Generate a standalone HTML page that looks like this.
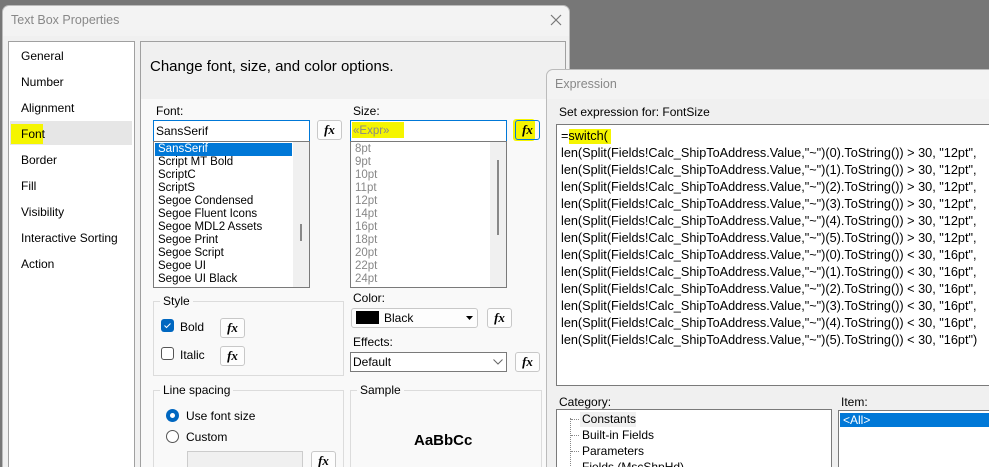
<!DOCTYPE html>
<html><head><meta charset="utf-8"><style>
*{margin:0;padding:0;box-sizing:border-box}
html,body{width:989px;height:467px;overflow:hidden}
body{background:#777;font-family:"Liberation Sans",sans-serif;font-size:12px;color:#000;position:relative}
.a{position:absolute}
.t{position:absolute;white-space:nowrap;line-height:14px}
.fx{position:absolute;width:25px;height:20px;border:1px solid #c8c8c8;border-radius:3px;background:#fdfdfd;font-family:"Liberation Serif",serif;font-style:italic;font-weight:bold;font-size:13px;text-align:center;line-height:18px}
.box{position:absolute;background:#fff;border:1px solid #7a7a7a}
.grp{position:absolute;border:1px solid #dcdcdc}
.lbl{position:absolute;background:#f9f9f9;padding:0 3px;top:-8px;left:6px;line-height:14px}
.li{height:13px;line-height:13px;padding-left:3px;font-size:11.5px;white-space:nowrap}
</style></head><body>
<div class="a" style="left:2px;top:5px;width:568px;height:470px;background:#f0f0f0;border-radius:7px 7px 0 0;border:1px solid #bbb"></div>
<div class="a" style="left:3px;top:6px;width:566px;height:30px;background:#f3f3f3;border-radius:7px 7px 0 0"></div>
<div class="t" style="left:11px;top:13px;color:#888;font-size:12.5px">Text Box Properties</div>
<svg class="a" style="left:550px;top:14px" width="12" height="12"><path d="M1 1L11 11M11 1L1 11" stroke="#777" stroke-width="1.2"/></svg>
<div class="box" style="left:8px;top:41px;width:127px;height:430px;border-color:#a0a0a0"></div>
<div class="a" style="left:10px;top:121px;width:122px;height:24px;background:#e6e6e6"></div>
<div class="a" style="left:11px;top:124px;width:32px;height:20px;background:#f5f500"></div>
<div class="t" style="left:21px;top:49px">General</div>
<div class="t" style="left:21px;top:75px">Number</div>
<div class="t" style="left:21px;top:101px">Alignment</div>
<div class="t" style="left:21px;top:127px">Font</div>
<div class="t" style="left:21px;top:153px">Border</div>
<div class="t" style="left:21px;top:179px">Fill</div>
<div class="t" style="left:21px;top:205px">Visibility</div>
<div class="t" style="left:21px;top:231px">Interactive Sorting</div>
<div class="t" style="left:21px;top:257px">Action</div>
<div class="a" style="left:140px;top:41px;width:426px;height:430px;background:#f9f9f9;border:1px solid #a0a0a0"></div>
<div class="a" style="left:141px;top:42px;width:424px;height:57px;background:#f0f0f0"></div>
<div class="t" style="left:150px;top:58px;font-size:15px;line-height:18px">Change font, size, and color options.</div>
<div class="t" style="left:156px;top:104px">Font:</div>
<div class="box" style="left:153px;top:120px;width:157px;height:22px;border-color:#0078d7"></div>
<div class="t" style="left:156px;top:124px">SansSerif</div>
<div class="fx" style="left:317px;top:120px">fx</div>
<div class="box" style="left:153px;top:141px;width:157px;height:147px;padding:1px">
<div style="position:absolute;right:0;top:0;width:16px;height:145px;background:#f0f0f0"></div>
<div style="position:absolute;left:146px;top:82px;width:2px;height:17px;background:#888"></div>
<div class="li" style="background:#0078d7;color:#fff;width:137px">SansSerif</div>
<div class="li">Script MT Bold</div><div class="li">ScriptC</div><div class="li">ScriptS</div>
<div class="li">Segoe Condensed</div><div class="li">Segoe Fluent Icons</div><div class="li">Segoe MDL2 Assets</div>
<div class="li">Segoe Print</div><div class="li">Segoe Script</div><div class="li">Segoe UI</div><div class="li">Segoe UI Black</div>
</div>
<div class="t" style="left:353px;top:104px">Size:</div>
<div class="box" style="left:350px;top:120px;width:157px;height:22px;border-color:#0078d7"></div>
<div class="a" style="left:352px;top:122px;width:52px;height:16px;background:#f5f500"></div>
<div class="t" style="left:353px;top:124px;color:#888;font-size:11.5px">«Expr»</div>
<div class="a" style="left:513px;top:119px;width:22px;height:22px;background:#f5f500;border-radius:3px"></div>
<div class="fx" style="left:515px;top:120px;background:transparent;border-color:#0078d7">fx</div>
<div class="box" style="left:350px;top:141px;width:157px;height:147px;padding:1px;color:#888">
<div style="position:absolute;right:0;top:0;width:16px;height:145px;background:#f0f0f0"></div>
<div style="position:absolute;left:146px;top:18px;width:2px;height:75px;background:#888"></div>
<div class="li">8pt</div><div class="li">9pt</div><div class="li">10pt</div><div class="li">11pt</div><div class="li">12pt</div><div class="li">14pt</div><div class="li">16pt</div><div class="li">18pt</div><div class="li">20pt</div><div class="li">22pt</div><div class="li">24pt</div>
</div>
<div class="grp" style="left:153px;top:301px;width:191px;height:75px"><div class="lbl">Style</div></div>
<div class="a" style="left:161px;top:319px;width:13px;height:13px;background:#0067c0;border-radius:3px"></div>
<svg class="a" style="left:161px;top:319px" width="13" height="13"><path d="M3.5 6.5L5.5 8.5L9.5 4.5" stroke="#fff" fill="none" stroke-width="1"/></svg>
<div class="t" style="left:180px;top:320px">Bold</div>
<div class="fx" style="left:220px;top:318px">fx</div>
<div class="a" style="left:161px;top:347px;width:13px;height:13px;border:1px solid #555;border-radius:3px;background:#fff"></div>
<div class="t" style="left:180px;top:348px">Italic</div>
<div class="fx" style="left:220px;top:346px">fx</div>
<div class="t" style="left:353px;top:291px">Color:</div>
<div class="a" style="left:351px;top:308px;width:127px;height:20px;border:1px solid #c8c8c8;border-radius:3px;background:#fdfdfd"></div>
<div class="a" style="left:356px;top:311px;width:23px;height:13px;background:#000"></div>
<div class="t" style="left:384px;top:311px">Black</div>
<svg class="a" style="left:466px;top:316px" width="7" height="4"><path d="M0 0H7L3.5 4Z" fill="#000"/></svg>
<div class="fx" style="left:487px;top:308px">fx</div>
<div class="t" style="left:353px;top:335px">Effects:</div>
<div class="box" style="left:350px;top:352px;width:157px;height:20px"></div>
<div class="t" style="left:353px;top:355px">Default</div>
<svg class="a" style="left:493px;top:359px" width="10" height="6"><path d="M0.5 0.5L5 5L9.5 0.5" stroke="#666" fill="none"/></svg>
<div class="fx" style="left:515px;top:352px">fx</div>
<div class="grp" style="left:153px;top:390px;width:191px;height:90px"><div class="lbl">Line spacing</div></div>
<div class="a" style="left:166px;top:409px;width:13px;height:13px;border-radius:50%;background:#0067c0"><div class="a" style="left:4px;top:4px;width:5px;height:5px;border-radius:50%;background:#fff"></div></div>
<div class="t" style="left:186px;top:409px">Use font size</div>
<div class="a" style="left:166px;top:430px;width:13px;height:13px;border-radius:50%;border:1px solid #555;background:#fff"></div>
<div class="t" style="left:186px;top:430px">Custom</div>
<div class="a" style="left:187px;top:451px;width:116px;height:20px;border:1px solid #ccc;background:#f0f0f0"></div>
<div class="fx" style="left:311px;top:451px">fx</div>
<div class="grp" style="left:350px;top:390px;width:192px;height:90px"><div class="lbl">Sample</div></div>
<div class="t" style="left:414px;top:432px;font-weight:bold;font-size:15px;line-height:18px">AaBbCc</div>
<div class="a" style="left:546px;top:69px;width:450px;height:400px;background:#f0f0f0;border:1px solid #bbb;border-radius:7px 0 0 0"></div>
<div class="a" style="left:547px;top:70px;width:450px;height:29px;background:#f3f3f3;border-radius:7px 0 0 0"></div>
<div class="t" style="left:555px;top:77px;color:#888;font-size:12.5px">Expression</div>
<div class="t" style="left:559px;top:105px">Set expression for: FontSize</div>
<div class="box" style="left:556px;top:124px;width:440px;height:262px"></div>
<div class="a" style="left:569px;top:129px;width:42px;height:15px;background:#f5f500"></div>
<div class="a" style="left:561px;top:128px;line-height:17px;font-size:12.7px;white-space:pre">=switch(
len(Split(Fields!Calc_ShipToAddress.Value,"~")(0).ToString()) &gt; 30, "12pt",
len(Split(Fields!Calc_ShipToAddress.Value,"~")(1).ToString()) &gt; 30, "12pt",
len(Split(Fields!Calc_ShipToAddress.Value,"~")(2).ToString()) &gt; 30, "12pt",
len(Split(Fields!Calc_ShipToAddress.Value,"~")(3).ToString()) &gt; 30, "12pt",
len(Split(Fields!Calc_ShipToAddress.Value,"~")(4).ToString()) &gt; 30, "12pt",
len(Split(Fields!Calc_ShipToAddress.Value,"~")(5).ToString()) &gt; 30, "12pt",
len(Split(Fields!Calc_ShipToAddress.Value,"~")(0).ToString()) &lt; 30, "16pt",
len(Split(Fields!Calc_ShipToAddress.Value,"~")(1).ToString()) &lt; 30, "16pt",
len(Split(Fields!Calc_ShipToAddress.Value,"~")(2).ToString()) &lt; 30, "16pt",
len(Split(Fields!Calc_ShipToAddress.Value,"~")(3).ToString()) &lt; 30, "16pt",
len(Split(Fields!Calc_ShipToAddress.Value,"~")(4).ToString()) &lt; 30, "16pt",
len(Split(Fields!Calc_ShipToAddress.Value,"~")(5).ToString()) &lt; 30, "16pt")</div>
<div class="t" style="left:559px;top:395px">Category:</div>
<div class="box" style="left:556px;top:409px;width:276px;height:70px"></div>
<div class="a" style="left:570px;top:418px;width:1px;height:50px;border-left:1px dotted #888"></div>
<div class="a" style="left:571px;top:419px;width:8px;border-top:1px dotted #888"></div>
<div class="a" style="left:571px;top:435px;width:8px;border-top:1px dotted #888"></div>
<div class="a" style="left:571px;top:451px;width:8px;border-top:1px dotted #888"></div>
<div class="a" style="left:580px;top:412px;width:56px;height:15px;background:#f0f0f0"></div>
<div class="t" style="left:582px;top:412px">Constants</div>
<div class="t" style="left:582px;top:428px">Built-in Fields</div>
<div class="t" style="left:582px;top:444px">Parameters</div>
<div class="t" style="left:582px;top:460px">Fields (MscShpHd)</div>
<div class="t" style="left:841px;top:395px">Item:</div>
<div class="box" style="left:838px;top:410px;width:160px;height:70px"></div>
<div class="a" style="left:840px;top:413px;width:150px;height:14px;background:#0078d7"></div>
<div class="t" style="left:843px;top:413px;color:#fff">&lt;All&gt;</div>
</body></html>
